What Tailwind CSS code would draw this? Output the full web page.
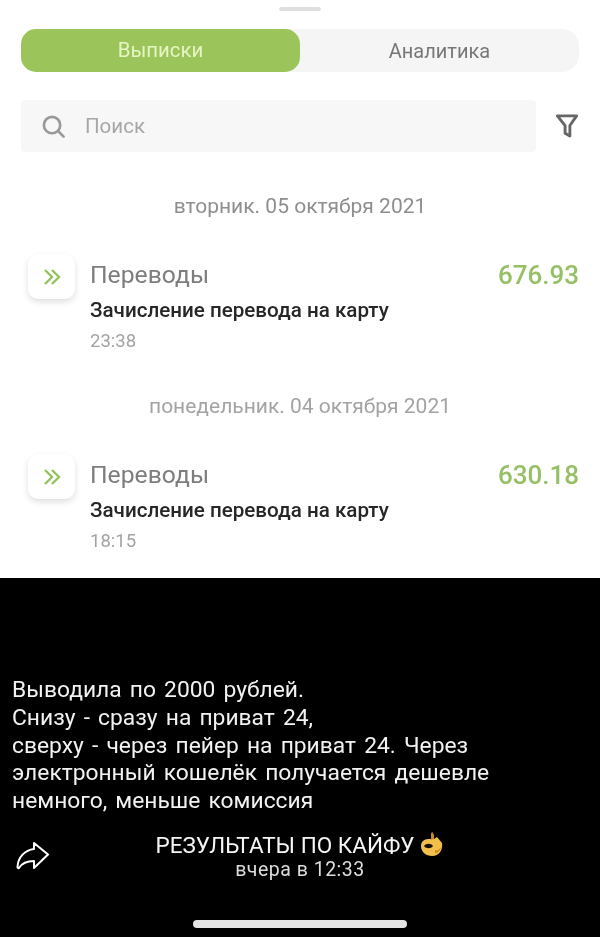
<!DOCTYPE html>
<html lang="ru">

<head>
  <meta charset="UTF-8" />
  <meta name="viewport" content="width=device-width, initial-scale=1.0" />
  <title>Выписки</title>
  <script src="https://cdn.jsdelivr.net/npm/@tailwindcss/browser@4"></script>
</head>

<body class="bg-black font-['Roboto',sans-serif] overflow-hidden">
  <div class="w-[600px] h-[937px] flex flex-col blur-[0.4px]">

    <!-- statement sheet -->
    <section class="h-[578px] bg-white pt-[7px] px-[21px] flex flex-col">
      <div class="w-[42px] h-[4px] rounded-full bg-[#dedede] mx-auto"></div>

      <!-- tabs -->
      <div class="mt-[18px] h-[43px] flex bg-[#f5f5f5] rounded-[17px]">
        <div class="w-[279px] bg-[#9bc45a] rounded-[15px] flex items-center justify-center text-[20.400px] text-[#e6f5c4]">Выписки</div>
        <div class="flex-1 flex items-center justify-center text-[20px] text-[#777777]">Аналитика</div>
      </div>

      <!-- search -->
      <div class="mt-[28px] flex items-center justify-between">
        <div class="w-[515px] h-[52px] bg-[#f7f7f7] rounded-[4px] flex items-center pl-[20px]">
          <svg class="w-[25px] h-[25px]" viewBox="0 0 26 26" fill="none" stroke="#9a9a9a" stroke-width="2.800" stroke-linecap="round">
            <circle cx="11.500" cy="11.500" r="8.500" />
            <path d="M18 18l5.500 5.500" />
          </svg>
          <span class="ml-[19px] text-[20.500px] text-[#a6a6a6]">Поиск</span>
        </div>
        <svg class="w-[24px] h-[25px]" viewBox="0 0 24 26" fill="none" stroke="#666666" stroke-width="3" stroke-linejoin="round">
          <path d="M2 2h20l-7 10v11l-5-3v-8z" />
        </svg>
      </div>

      <p class="mt-[43px] text-center text-[21px] leading-[22px] text-[#8e8e8e]">вторник. 05 октября 2021</p>

      <!-- first transfer -->
      <div class="mt-[37px] flex items-start pl-[7px]">
        <div class="w-[47px] h-[45px] bg-white rounded-[10px] shadow-[0_3px_6px_rgba(0,0,0,0.13)] flex items-center justify-center">
          <svg class="w-[18px] h-[18px]" viewBox="0 0 18 18" fill="none" stroke="#93c25a" stroke-width="2.300">
            <path d="M2 2l7 7-7 7M9 2l7 7-7 7" />
          </svg>
        </div>
        <div class="ml-[15px] pt-[7px] flex-1">
          <div class="flex items-center justify-between">
            <span class="text-[24.700px] leading-[28px] text-[#7d7d7d]">Переводы</span>
            <span class="text-[26px] leading-[28px] font-medium text-[#96c066]">676.93</span>
          </div>
          <p class="mt-[9px] text-[20.600px] leading-[24px] font-medium text-[#262626]">Зачисление перевода на карту</p>
          <p class="mt-[9px] text-[18.500px] leading-[20px] text-[#a3a3a3]">23:38</p>
        </div>
      </div>

      <p class="mt-[44px] text-center text-[21px] leading-[22px] text-[#a3a3a3]">понедельник. 04 октября 2021</p>

      <!-- second transfer -->
      <div class="mt-[37px] flex items-start pl-[7px]">
        <div class="w-[47px] h-[45px] bg-white rounded-[10px] shadow-[0_3px_6px_rgba(0,0,0,0.13)] flex items-center justify-center">
          <svg class="w-[18px] h-[18px]" viewBox="0 0 18 18" fill="none" stroke="#93c25a" stroke-width="2.300">
            <path d="M2 2l7 7-7 7M9 2l7 7-7 7" />
          </svg>
        </div>
        <div class="ml-[15px] pt-[7px] flex-1">
          <div class="flex items-center justify-between">
            <span class="text-[24.700px] leading-[28px] text-[#7d7d7d]">Переводы</span>
            <span class="text-[26px] leading-[28px] font-medium text-[#96c066]">630.18</span>
          </div>
          <p class="mt-[9px] text-[20.600px] leading-[24px] font-medium text-[#262626]">Зачисление перевода на карту</p>
          <p class="mt-[9px] text-[18.500px] leading-[20px] text-[#a3a3a3]">18:15</p>
        </div>
      </div>
    </section>

    <!-- story caption -->
    <section class="flex-1 bg-black text-white flex flex-col">
      <p class="mt-[98px] px-[12px] text-[22.800px] leading-[27.800px] [word-spacing:2.500px] text-[#f2f2f2]">
        Выводила по 2000 рублей.<br />
        Снизу - сразу на приват 24,<br />
        сверху - через пейер на приват 24. Через<br />
        электронный кошелёк получается дешевле<br />
        немного, меньше комиссия
      </p>

      <div class="mt-[16px] flex items-start">
        <svg class="ml-[16px] mt-[10px] w-[33px] h-[30px]" viewBox="0 0 33 30" fill="none" stroke="#ffffff" stroke-width="2" stroke-linejoin="round">
          <path d="M18 2L32 13.500 18 27V20C11 20 6 22 3 27 2 27.500 1.500 27 1.500 26 2 16 9 9 18 8Z" />
        </svg>
        <div class="ml-[101px] flex flex-col items-center w-[300px]">
          <div class="flex items-center">
            <span class="text-[22.500px] leading-[24px] text-[#f5f5f5]">РЕЗУЛЬТАТЫ ПО КАЙФУ</span>
            <svg class="ml-[6px] mb-[2px] w-[24px] h-[26px]" viewBox="0 0 24 26">
              <path d="M12 1c2 2 2 5 2 7l3-2 5 6c1 6-2 13-10 13C6 25 1 21 1 15c0-4 3-7 7-7h3c0-3 0-5 1-7z" fill="#f2bf4b" />
              <path d="M4 15c2-3 7-3 9 0-2 3-7 3-9 0z" fill="#1a1206" />
              <path d="M12 1c2 2 2 5 2 7l-3 1c0-3 0-6 1-8zM15 19c2 1 4 0 6-3-1 4-3 6-6 6z" fill="#c98a26" />
            </svg>
          </div>
          <span class="text-[19.500px] leading-[22px] tracking-[0.5px] text-[#dddddd]">вчера в 12:33</span>
        </div>
      </div>

      <div class="mt-[39px] mx-auto w-[214px] h-[8px] rounded-full bg-[#e4e4e4]"></div>
    </section>
  </div>
</body>

</html>
